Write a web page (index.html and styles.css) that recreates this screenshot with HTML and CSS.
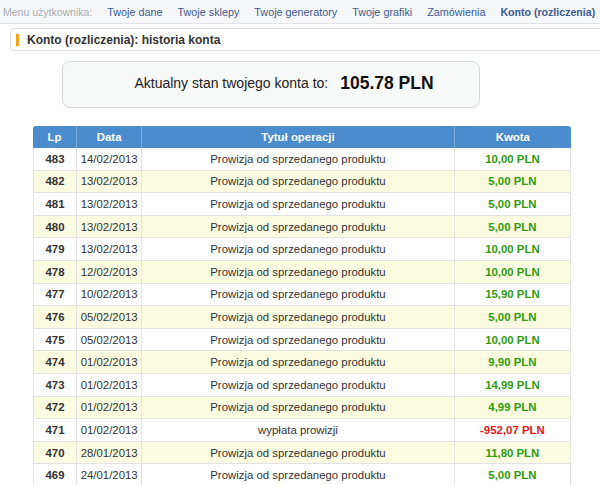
FILE: index.html
```html
<!DOCTYPE html>
<html lang="pl">
<head>
<meta charset="utf-8">
<title>Konto (rozliczenia): historia konta</title>
<link rel="stylesheet" href="styles.css">
</head>
<body>
<nav class="menu">
  <span class="menu-label">Menu użytkownika:</span>
  <a class="menu-link" href="#">Twoje dane</a>
  <a class="menu-link" href="#">Twoje sklepy</a>
  <a class="menu-link" href="#">Twoje generatory</a>
  <a class="menu-link" href="#">Twoje grafiki</a>
  <a class="menu-link" href="#">Zamówienia</a>
  <a class="menu-link active" href="#">Konto (rozliczenia)</a>
</nav>
<div class="title-box">
  <span class="title-mark"></span>
  <h1 class="title">Konto (rozliczenia): historia konta</h1>
</div>
<div class="balance">
  <span class="balance-label">Aktualny stan twojego konta to:</span>
  <strong class="balance-value">105.78 PLN</strong>
</div>
<table class="history">
  <thead>
    <tr><th class="c-lp">Lp</th><th class="c-date">Data</th><th class="c-title">Tytuł operacji</th><th class="c-amount">Kwota</th></tr>
  </thead>
  <tbody>
    <tr><td class="lp">483</td><td>14/02/2013</td><td>Prowizja od sprzedanego produktu</td><td class="plus">10,00 PLN</td></tr>
    <tr class="alt"><td class="lp">482</td><td>13/02/2013</td><td>Prowizja od sprzedanego produktu</td><td class="plus">5,00 PLN</td></tr>
    <tr><td class="lp">481</td><td>13/02/2013</td><td>Prowizja od sprzedanego produktu</td><td class="plus">5,00 PLN</td></tr>
    <tr class="alt"><td class="lp">480</td><td>13/02/2013</td><td>Prowizja od sprzedanego produktu</td><td class="plus">5,00 PLN</td></tr>
    <tr><td class="lp">479</td><td>13/02/2013</td><td>Prowizja od sprzedanego produktu</td><td class="plus">10,00 PLN</td></tr>
    <tr class="alt"><td class="lp">478</td><td>12/02/2013</td><td>Prowizja od sprzedanego produktu</td><td class="plus">10,00 PLN</td></tr>
    <tr><td class="lp">477</td><td>10/02/2013</td><td>Prowizja od sprzedanego produktu</td><td class="plus">15,90 PLN</td></tr>
    <tr class="alt"><td class="lp">476</td><td>05/02/2013</td><td>Prowizja od sprzedanego produktu</td><td class="plus">5,00 PLN</td></tr>
    <tr><td class="lp">475</td><td>05/02/2013</td><td>Prowizja od sprzedanego produktu</td><td class="plus">10,00 PLN</td></tr>
    <tr class="alt"><td class="lp">474</td><td>01/02/2013</td><td>Prowizja od sprzedanego produktu</td><td class="plus">9,90 PLN</td></tr>
    <tr><td class="lp">473</td><td>01/02/2013</td><td>Prowizja od sprzedanego produktu</td><td class="plus">14,99 PLN</td></tr>
    <tr class="alt"><td class="lp">472</td><td>01/02/2013</td><td>Prowizja od sprzedanego produktu</td><td class="plus">4,99 PLN</td></tr>
    <tr><td class="lp">471</td><td>01/02/2013</td><td>wypłata prowizji</td><td class="minus">-952,07 PLN</td></tr>
    <tr class="alt"><td class="lp">470</td><td>28/01/2013</td><td>Prowizja od sprzedanego produktu</td><td class="plus">11,80 PLN</td></tr>
    <tr><td class="lp">469</td><td>24/01/2013</td><td>Prowizja od sprzedanego produktu</td><td class="plus">5,00 PLN</td></tr>
  </tbody>
</table>
</body>
</html>
```
FILE: styles.css
```css
html, body {
  margin: 0;
  padding: 0;
  background: #ffffff;
  font-family: "Liberation Sans", Arial, sans-serif;
  color: #333333;
  overflow: hidden;
}

.menu {
  display: flex;
  align-items: center;
  gap: 15px;
  height: 23px;
  padding-left: 3px;
  background: #f6f7f8;
  border-bottom: 1px solid #e1e3e5;
  white-space: nowrap;
}

.menu-label {
  font-size: 10.5px;
  color: #a9adb2;
}

.menu-link {
  font-size: 10.8px;
  color: #3d5a92;
  text-decoration: none;
}

.menu-link.active {
  font-weight: bold;
  font-size: 10.6px;
}

.title-box {
  display: flex;
  align-items: center;
  gap: 8px;
  height: 21px;
  margin: 4px -20px 0 10px;
  padding-left: 5px;
  border: 1px solid #e2e2e2;
  border-radius: 4px;
  background: #ffffff;
}

.title-mark {
  width: 3px;
  height: 12px;
  background: #f4a11a;
}

.title {
  margin: 0;
  font-size: 12px;
  font-weight: bold;
  color: #333333;
}

.balance {
  display: flex;
  align-items: center;
  justify-content: center;
  gap: 12px;
  width: 418px;
  height: 47px;
  margin: 10px 0 0 62px;
  padding: 0 0 3px 26px;
  box-sizing: border-box;
  border: 1px solid #d6d8d8;
  border-radius: 8px;
  background: #f8f9f9;
}

.balance-label {
  font-size: 14px;
  color: #222222;
}

.balance-value {
  font-size: 17.5px;
  font-weight: bold;
  color: #111111;
}

.history {
  width: 538px;
  margin: 18px 0 0 33px;
  border-collapse: separate;
  border-spacing: 0;
  font-size: 11.4px;
  table-layout: fixed;
}

.history th {
  height: 22px;
  padding: 0;
  background: #4b8ccc;
  color: #ffffff;
  font-weight: bold;
  text-align: center;
  border-left: 1px solid #7eaede;
}

.history th:first-child {
  border-left: none;
  border-top-left-radius: 3px;
}

.history th:last-child {
  border-top-right-radius: 3px;
}

.c-lp { width: 43px; }
.c-date { width: 64px; }
.c-title { width: 311px; }
.c-amount { width: 116px; }

.history td {
  height: 21.6px;
  padding: 0;
  text-align: center;
  color: #333333;
  border-bottom: 1px solid #e3e3e3;
  border-left: 1px solid #e3e3e3;
  white-space: nowrap;
}

.history td:last-child {
  border-right: 1px solid #e3e3e3;
}

.history tr.alt td {
  background: #fcfce0;
}

.history td.lp {
  font-weight: bold;
}

.history td.plus {
  font-weight: bold;
  color: #2f9a12;
}

.history td.minus {
  font-weight: bold;
  color: #e5141c;
}
```
